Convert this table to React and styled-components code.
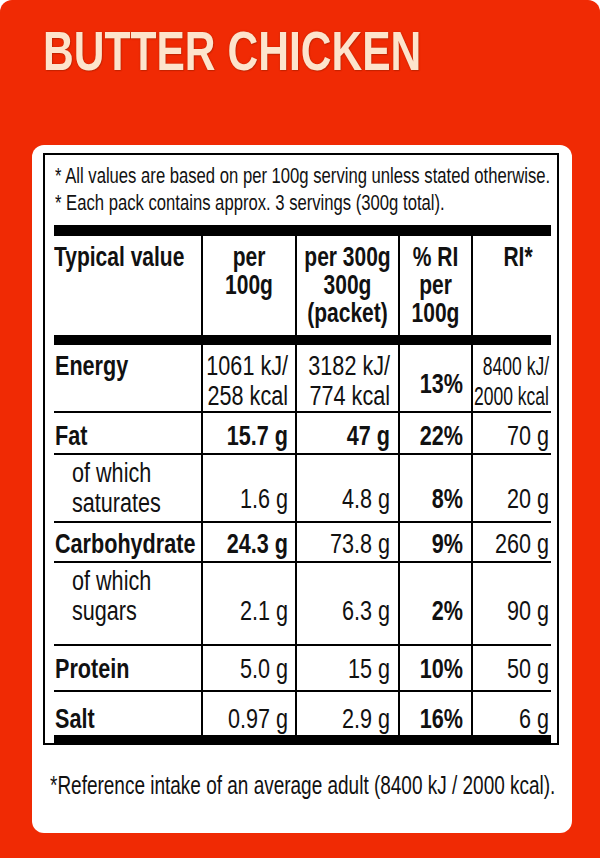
import React from 'react';
import styled, { createGlobalStyle } from 'styled-components';

// No condensed face is installed, so text is drawn in Liberation Sans and squeezed sideways.
const sans = `"Liberation Sans", Arial, sans-serif`;

const GlobalStyle = createGlobalStyle`
  html, body {
    margin: 0;
    padding: 0;
    background: #ffffff;
  }
  body {
    font-family: ${sans};
    color: #111111;
  }
`;

const Squeeze = styled.div`
  width: calc(100% / ${p => p.$s});
  transform: scaleX(${p => p.$s});
  transform-origin: left center;
  white-space: nowrap;
`;

const Page = styled.div`
  width: 600px;
  min-height: 858px;
  box-sizing: border-box;
  background: #f02a04;
  border-radius: 12px 12px 0 0;
  padding: 23px 28px 25px 32px;
`;

const Title = styled.h1`
  margin: 0 0 66px 11px;
  font-family: ${sans};
  font-size: 56px;
  line-height: 56px;
  font-weight: 700;
  color: #fde4cc;
  text-shadow: 0 0 2px rgba(140, 30, 0, 0.55), 1px 1px 1px rgba(150, 30, 0, 0.4);
`;

const Card = styled.div`
  height: 688px;
  box-sizing: border-box;
  background: #ffffff;
  border-radius: 12px;
  padding: 8px 13px 0 11px;
`;

const Panel = styled.div`
  border: 2px solid #000000;
  padding: 7px 6px 0 9px;
`;

const Notes = styled.div`
  margin-bottom: 9px;
  padding-left: 1px;
  font-size: 22.5px;
  line-height: 27px;
`;

const Table = styled.table`
  width: 497px;
  table-layout: fixed;
  border-collapse: separate;
  border-spacing: 0;
  font-family: ${sans};
`;

const Col = styled.col`
  width: ${p => p.$w}px;
`;

const HeadRow = styled.tr`
  height: 120px;
`;

const HeadCell = styled.th`
  border-top: 11px solid #000000;
  border-bottom: 10px solid #000000;
  border-left: ${p => (p.$first ? 'none' : '2px solid #000000')};
  padding: 7px 0 0 ${p => p.$pl || 0}px;
  vertical-align: top;
  text-align: ${p => (p.$first ? 'left' : 'center')};
  font-size: 28px;
  line-height: 28px;
  font-weight: 700;
`;

const Row = styled.tr`
  height: ${p => p.$h}px;
`;

const LabelCell = styled.td`
  border-bottom: ${p => (p.$last ? 8 : 2)}px solid #000000;
  padding: ${p => p.$pt || 0}px 0 ${p => p.$pb || 0}px ${p => (p.$sub ? 18 : 1)}px;
  vertical-align: ${p => (p.$top ? 'top' : 'bottom')};
  font-size: 27px;
  line-height: 30px;
  font-weight: ${p => (p.$sub ? 400 : 700)};
`;

const ValueCell = styled.td`
  border-bottom: ${p => (p.$last ? 8 : 2)}px solid #000000;
  border-left: 2px solid #000000;
  padding: ${p => p.$pt || 0}px ${p => p.$pr}px ${p => p.$pb || 0}px 0;
  vertical-align: ${p => p.$valign};
  text-align: right;
  font-size: ${p => (p.$small ? 25 : 27)}px;
  line-height: 30px;
  font-weight: ${p => (p.$bold ? 700 : 400)};
`;

const Footer = styled.div`
  margin: 26px 0 0 7px;
  font-size: 26px;
  line-height: 28px;
`;

const columns = [147, 94, 103, 73, 80];
const padRight = [7, 8, 8, 2];
const BODY = 0.8;

const rows = [
  {
    label: 'Energy',
    values: [['1061 kJ/', '258 kcal'], ['3182 kJ/', '774 kcal'], ['13%'], ['8400 kJ/', '2000 kcal']],
    bold: [false, false, true, false],
    h: 68,
    energy: true,
  },
  { label: 'Fat', values: [['15.7 g'], ['47 g'], ['22%'], ['70 g']], bold: [true, true, true, false], h: 42, pb: 2, lpb: 2 },
  { label: ['of which', 'saturates'], sub: true, values: [['1.6 g'], ['4.8 g'], ['8%'], ['20 g']], bold: [false, false, true, false], h: 68, pb: 7, lpb: 3 },
  { label: 'Carbohydrate', values: [['24.3 g'], ['73.8 g'], ['9%'], ['260 g']], bold: [true, false, true, false], h: 40, pb: 2, lpb: 2 },
  { label: ['of which', 'sugars'], sub: true, values: [['2.1 g'], ['6.3 g'], ['2%'], ['90 g']], bold: [false, false, true, false], h: 83, pb: 18, lpb: 18 },
  { label: 'Protein', values: [['5.0 g'], ['15 g'], ['10%'], ['50 g']], bold: [false, false, true, false], h: 46, pb: 6, lpb: 6 },
  { label: 'Salt', values: [['0.97 g'], ['2.9 g'], ['16%'], ['6 g']], bold: [false, false, true, false], h: 51, pb: 1, lpb: 1, last: true },
];

const lines = parts => parts.map((t, i) => (
  <React.Fragment key={i}>
    {i > 0 && <br />}
    {t}
  </React.Fragment>
));

const App = () => (
  <>
    <GlobalStyle />
    <Page>
      <Title>
        <Squeeze $s={0.76}>BUTTER CHICKEN</Squeeze>
      </Title>
      <Card>
        <Panel>
          <Notes>
            <Squeeze $s={0.74}>
              * All values are based on per 100g serving unless stated otherwise.<br />
              * Each pack contains approx. 3 servings (300g total).
            </Squeeze>
          </Notes>
          <Table>
            <colgroup>
              {columns.map((w, i) => <Col key={i} $w={w} />)}
            </colgroup>
            <thead>
              <HeadRow>
                <HeadCell $first><Squeeze $s={0.75}>Typical value</Squeeze></HeadCell>
                <HeadCell><Squeeze $s={0.75}>{lines(['per', '100g'])}</Squeeze></HeadCell>
                <HeadCell><Squeeze $s={0.75}>{lines(['per 300g', '300g', '(packet)'])}</Squeeze></HeadCell>
                <HeadCell><Squeeze $s={0.75}>{lines(['% RI', 'per', '100g'])}</Squeeze></HeadCell>
                <HeadCell $pl={12}><Squeeze $s={0.75}>RI*</Squeeze></HeadCell>
              </HeadRow>
            </thead>
            <tbody>
              {rows.map(row => (
                <Row key={String(row.label)} $h={row.h}>
                  <LabelCell
                    $sub={row.sub}
                    $last={row.last}
                    $top={row.energy}
                    $pt={row.energy ? 6 : 0}
                    $pb={row.lpb}
                  >
                    <Squeeze $s={BODY}>
                      {Array.isArray(row.label) ? lines(row.label) : row.label}
                    </Squeeze>
                  </LabelCell>
                  {row.values.map((v, i) => {
                    const percent = i === 2;
                    const small = row.energy && i === 3;
                    const valign = row.energy ? (percent ? 'middle' : 'top') : 'bottom';
                    let pt = 0;
                    if (row.energy) pt = percent ? 12 : 6;
                    return (
                      <ValueCell
                        key={i}
                        $bold={row.bold[i]}
                        $last={row.last}
                        $valign={valign}
                        $pt={pt}
                        $pb={row.energy ? 0 : row.pb}
                        $pr={padRight[i]}
                        $small={small}
                      >
                        <Squeeze $s={small ? 0.7 : BODY}>{lines(v)}</Squeeze>
                      </ValueCell>
                    );
                  })}
                </Row>
              ))}
            </tbody>
          </Table>
        </Panel>
        <Footer>
          <Squeeze $s={0.73}>*Reference intake of an average adult (8400 kJ / 2000 kcal).</Squeeze>
        </Footer>
      </Card>
    </Page>
  </>
);

export default App;
